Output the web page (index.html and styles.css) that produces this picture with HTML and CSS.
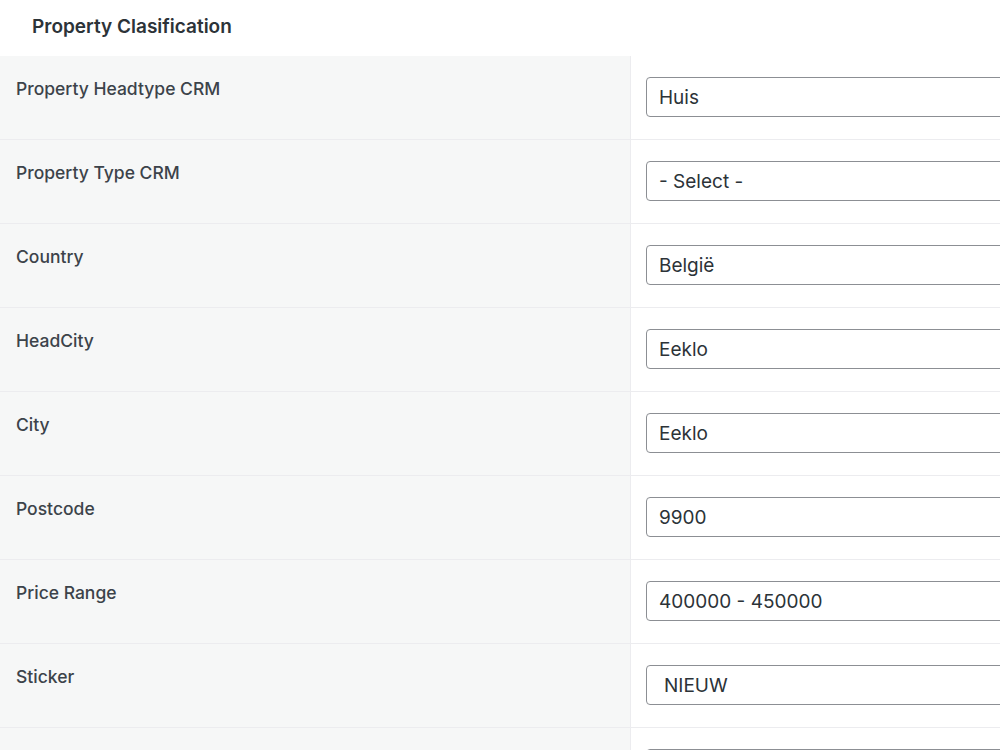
FILE: index.html
```
<html>
<head>
<title>Property Clasification</title>
<link rel="stylesheet" href="styles.css">
</head>
<body>

<div class="head">Property Clasification</div>

<div class="form">

<div class="row">
  <div class="label">Property Headtype CRM</div>
  <div class="field"><div class="input">Huis</div></div>
</div>

<div class="row">
  <div class="label">Property Type CRM</div>
  <div class="field"><div class="input">- Select -</div></div>
</div>

<div class="row">
  <div class="label">Country</div>
  <div class="field"><div class="input">België</div></div>
</div>

<div class="row">
  <div class="label">HeadCity</div>
  <div class="field"><div class="input">Eeklo</div></div>
</div>

<div class="row">
  <div class="label">City</div>
  <div class="field"><div class="input">Eeklo</div></div>
</div>

<div class="row">
  <div class="label">Postcode</div>
  <div class="field"><div class="input">9900</div></div>
</div>

<div class="row">
  <div class="label">Price Range</div>
  <div class="field"><div class="input">400000 - 450000</div></div>
</div>

<div class="row">
  <div class="label">Sticker</div>
  <div class="field"><div class="input sticker">NIEUW</div></div>
</div>

<div class="row">
  <div class="label"></div>
  <div class="field"><div class="input"></div></div>
</div>

</div>

</body>
</html>
```

FILE: styles.css
```
body {
  margin: 0;
  background-color: #ffffff;
  font-family: Inter, "Liberation Sans", sans-serif;
  overflow: hidden;
}

.head {
  height: 56px;
  padding-left: 32px;
  box-sizing: border-box;
  padding-top: 15px;
  font-size: 19px;
  line-height: 24px;
  font-weight: 600;
  color: #2c3338;
}

.row {
  display: grid;
  grid-template-columns: 631px 1fr;
  border-bottom: 1px solid #ececef;
}

.label {
  background-color: #f6f7f7;
  border-right: 1px solid #ececef;
  height: 83px;
  padding: 22px 0 0 16px;
  box-sizing: border-box;
  font-size: 17.5px;
  line-height: 22px;
  font-weight: 500;
  color: #3c434a;
}

.field {
  padding: 21px 0 0 15px;
}

.input {
  width: 420px;
  height: 40px;
  box-sizing: border-box;
  border: 1px solid #8c8f94;
  border-radius: 4px;
  padding: 1px 0 0 12px;
  font-size: 19px;
  line-height: 37px;
  color: #2c3338;
  background-color: #ffffff;
}

.sticker {
  padding-left: 17px;
}
```
